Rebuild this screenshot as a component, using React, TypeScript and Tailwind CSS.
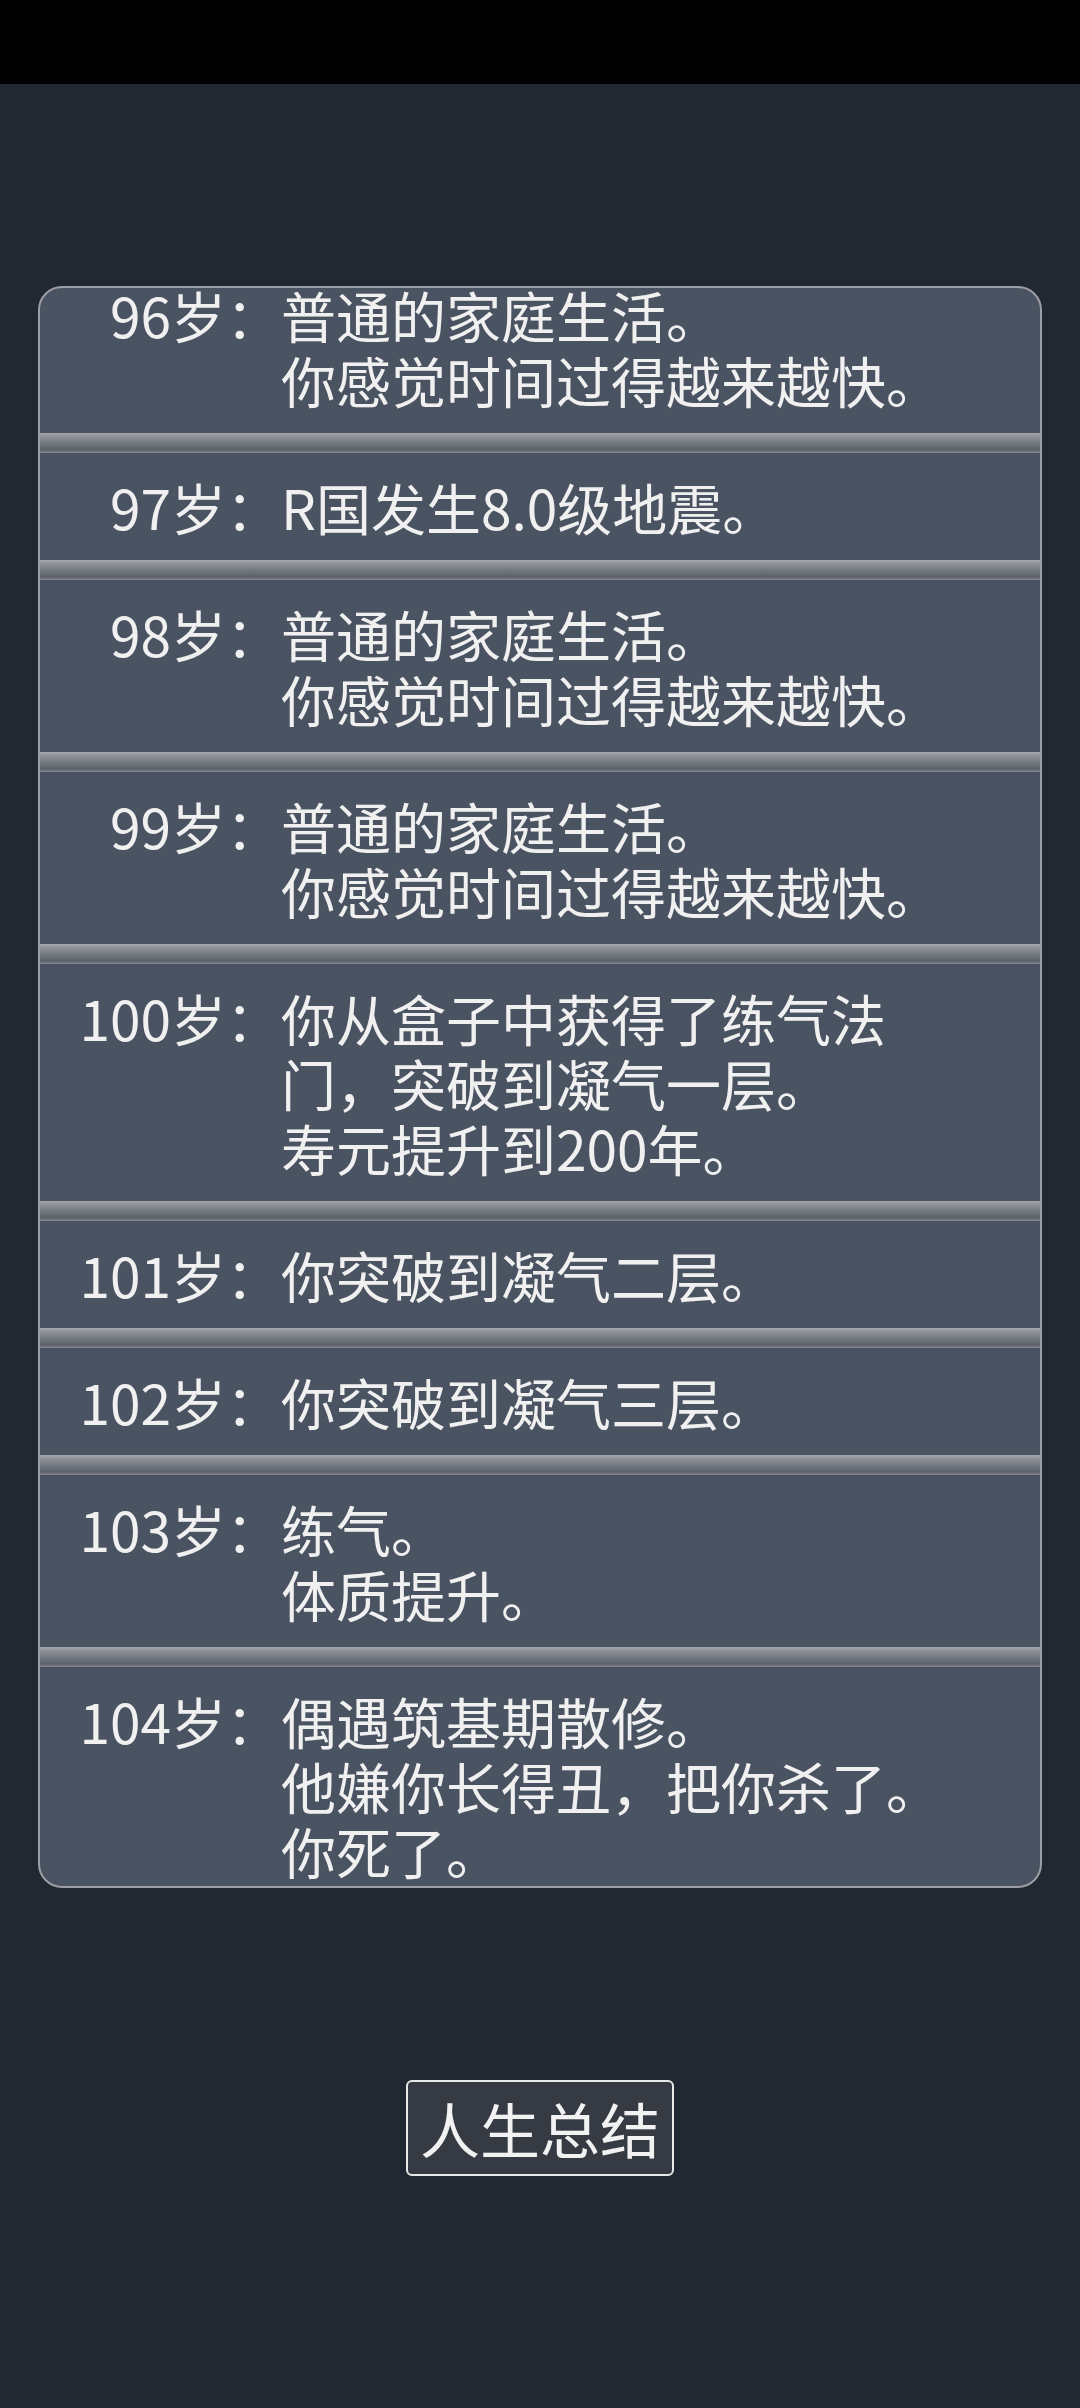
// Life log — scrolled list of yearly events + summary button.

const CJK = '"Noto Sans CJK SC", "Noto Sans", sans-serif';

type Entry = { age: number; lines: string[] };

const ENTRIES: Entry[] = [
  { age: 96, lines: ['普通的家庭生活。', '你感觉时间过得越来越快。'] },
  { age: 97, lines: ['R国发生8.0级地震。'] },
  { age: 98, lines: ['普通的家庭生活。', '你感觉时间过得越来越快。'] },
  { age: 99, lines: ['普通的家庭生活。', '你感觉时间过得越来越快。'] },
  { age: 100, lines: ['你从盒子中获得了练气法门，突破到凝气一层。', '寿元提升到200年。'] },
  { age: 101, lines: ['你突破到凝气二层。'] },
  { age: 102, lines: ['你突破到凝气三层。'] },
  { age: 103, lines: ['练气。', '体质提升。'] },
  { age: 104, lines: ['偶遇筑基期散修。', '他嫌你长得丑，把你杀了。', '你死了。'] },
];

function Separator() {
  return (
    <div className="h-[20px] bg-[linear-gradient(to_bottom,#a4a7ac_0%,#8d9197_20%,#71767e_55%,#5b616a_85%,#868a91_100%)]" />
  );
}

function Row({ entry }: { entry: Entry }) {
  return (
    <div className="flex py-[21px] text-[55px] leading-[65px] text-[#f0f0f0]">
      <div className="w-[241px] shrink-0 text-right whitespace-nowrap">{entry.age}岁：</div>
      <div className="w-[680px]">
        {entry.lines.map((l, i) => (
          <p key={i}>{l}</p>
        ))}
      </div>
    </div>
  );
}

export default function App() {
  return (
    <div lang="zh-CN" className="min-h-[2408px] bg-[#222831]" style={{ fontFamily: CJK }}>
      <div className="h-[84px] bg-black" />

      <div className="mx-[38px] mt-[202px] h-[1602px] overflow-hidden rounded-[24px] border-2 border-[#9b9fa5] bg-[#4a5362]">
        <div className="-mt-[27px]">
          {ENTRIES.map((e, i) => (
            <div key={e.age}>
              {i > 0 && <Separator />}
              <Row entry={e} />
            </div>
          ))}
        </div>
      </div>

      <div className="mt-[192px] flex justify-center">
        <button className="h-[96px] rounded-[6px] border-2 border-[#e8e8e8] bg-[#353a43] px-[12px] text-[60px] leading-[72px] text-[#f2f2f2]">
          人生总结
        </button>
      </div>
    </div>
  );
}
